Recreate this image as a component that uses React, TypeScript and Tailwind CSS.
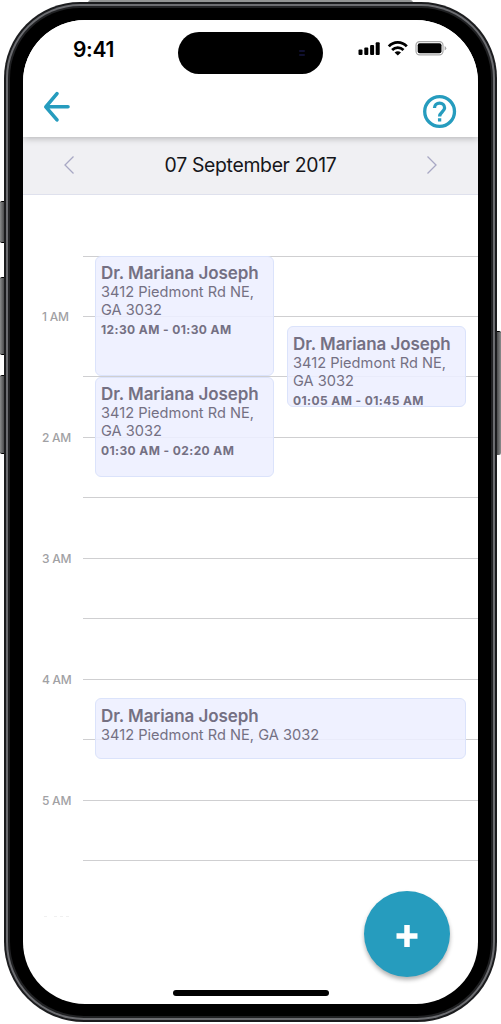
import type { ReactNode } from "react";

const hours = ["1 AM", "2 AM", "3 AM", "4 AM", "5 AM"];

function StatusBar() {
  return (
    <div className="flex h-[62px] items-start pl-[50px] pr-[31px]">
      <div className="w-[105px] pt-[15px] text-[21px] leading-[30px] font-semibold tracking-[-0.35px] text-black">9:41</div>
      <div className="mt-[12px] flex h-[42px] w-[145px] items-center justify-end rounded-full bg-black pr-[18px]">
        <div className="flex size-[6px] flex-col justify-between rounded-full">
          <i className="h-[2px] rounded-full bg-[#101030]" />
          <i className="h-[2px] rounded-full bg-[#101030]" />
        </div>
      </div>
      <div className="mt-[20px] ml-auto flex items-start">
        <svg width="89" height="17" viewBox="0 0 89 17">
          <rect x="0.5" y="9.5" width="4" height="5.5" rx="1" />
          <rect x="6.3" y="7.6" width="4" height="7.4" rx="1" />
          <rect x="12.1" y="5" width="4" height="10" rx="1" />
          <rect x="17.7" y="2.3" width="4" height="12.7" rx="1" />
          <g transform="translate(30 1.2)" fill="none" stroke="#000" strokeWidth="2.7">
            <path d="M0.8 5.2 C5.5 -0.3 14 -0.3 18.8 5.2" />
            <path d="M4.1 8.8 C7.3 5.5 12.3 5.5 15.5 8.8" />
            <path d="M9.8 14.4 L6.6 11.2 C8.5 9.6 11.1 9.6 13 11.2Z" fill="#000" stroke="none" />
          </g>
          <rect x="58" y="1.6" width="27" height="13.2" rx="3.6" fill="none" stroke="#a8a8a8" strokeWidth="1.2" />
          <rect x="59.7" y="3.2" width="23.8" height="10" rx="2" />
          <path d="M86.6 6 Q88.3 6.7 88.3 8.2 Q88.3 9.7 86.6 10.4Z" fill="#a8a8a8" />
        </svg>
      </div>
    </div>
  );
}

function Header() {
  return (
    <header className="relative z-10 h-[117px] bg-white shadow-[0_1px_7px_rgba(0,0,0,0.28)]">
      <StatusBar />
      <div className="flex items-start justify-between pr-[21px] pl-[20px]">
        <svg className="mt-[9px]" width="28" height="32" viewBox="0 0 28 32" fill="none" stroke="#269cbe" strokeWidth="3.6" strokeLinecap="round" strokeLinejoin="round">
          <path d="M14 2.7 L2.8 15.8 L14 28.8 M3.5 15.8 H25" />
        </svg>
        <svg className="mt-[12px]" width="35" height="35" viewBox="0 0 35 35" fill="none" stroke="#269cbe" strokeWidth="3.3">
          <circle cx="17.6" cy="17.5" r="14.9" />
          <path d="M12.5 14 C12.5 11 14.7 9.2 17.6 9.2 C20.4 9.2 22.6 11.1 22.6 14 C22.6 17.6 17.6 17.9 17.6 22.6" />
          <path d="M17.6 24.2 V27.4" />
        </svg>
      </div>
    </header>
  );
}

function Chevron({ d }: { d: string }) {
  return (
    <svg width="12" height="20" viewBox="0 0 12 20" fill="none" stroke="#a8a8c4" strokeWidth="1.3">
      <path d={d} />
    </svg>
  );
}

function DateBar() {
  return (
    <div className="flex h-[58px] items-center justify-between border-b border-[#dfe1ed] bg-[#f0f0f3] pr-[40px] pb-[2px] pl-[40px]">
      <Chevron d="M10.5 1.5 L2 10 L10.5 18.5" />
      <span className="text-[19.4px] leading-[24px] tracking-[-0.32px] text-[#16161a]">07 September 2017</span>
      <Chevron d="M1.5 1.5 L10 10 L1.5 18.5" />
    </div>
  );
}

function Appointment({ place, address, time }: { place: string; address: ReactNode; time?: string }) {
  return (
    <article className={"absolute overflow-hidden rounded-[6px] border border-[#dbe3fb] bg-[#edefff]/88 pl-[5px] text-[#747083] " + place}>
      <h2 className="text-[17px] leading-[20px] font-semibold tracking-[-0.07px] whitespace-nowrap">Dr. Mariana Joseph</h2>
      <p className="mt-px text-[14.6px] leading-[17.6px] tracking-[0.02px] whitespace-nowrap">{address}</p>
      {time && <p className="mt-[3px] text-[12px] leading-[16px] font-bold tracking-[0.4px] whitespace-nowrap">{time}</p>}
    </article>
  );
}

function Schedule() {
  const split = (
    <>
      3412 Piedmont Rd NE,
      <br />
      GA 3032
    </>
  );
  return (
    <main className="relative pt-[60.6px]">
      <div className="ml-[60px] border-t border-[#cfcfd1]" />
      {hours.map((hour) => (
        <div key={hour} className="flex h-[120.9px] flex-col">
          <div className="flex h-[69px] items-center">
            <span className="mt-[52px] w-[60px] pl-[19px] text-[12px] leading-[16px] font-medium tracking-[-0.25px] text-[#a1a1a4]">{hour}</span>
            <div className="mt-[51px] flex-1 border-t border-[#cfcfd1]" />
          </div>
          <div className="mt-auto ml-[60px] border-t border-[#cfcfd1]" />
        </div>
      ))}
      <div className="mt-[55px] ml-[21px] flex gap-[3px]">
        <i className="mr-[4px] h-px w-[3px] bg-[#f0f0f0]" />
        <i className="h-px w-[3px] bg-[#f0f0f0]" />
        <i className="h-px w-[3px] bg-[#f0f0f0]" />
        <i className="h-px w-[3px] bg-[#f0f0f0]" />
      </div>
      <Appointment place="left-[72px] top-[61px] h-[120px] w-[179px] pt-[6px]" address={split} time="12:30 AM - 01:30 AM" />
      <Appointment place="left-[72px] top-[182px] h-[100px] w-[179px] pt-[6px]" address={split} time="01:30 AM - 02:20 AM" />
      <Appointment place="left-[264px] top-[131px] h-[81px] w-[179px] pt-[7px]" address={split} time="01:05 AM - 01:45 AM" />
      <Appointment place="left-[72px] top-[503px] h-[61px] w-[371px] pt-[7px]" address="3412 Piedmont Rd NE, GA 3032" />
    </main>
  );
}

function Phone({ children }: { children: ReactNode }) {
  return (
    <div className="relative h-[1024px] w-[501px] overflow-hidden bg-white px-[4px] pt-[2px]">
      <i className="absolute top-[201px] left-0 h-[42px] w-[6px] rounded-l-[2px] border-y border-black bg-linear-to-r from-[#8a8c8c] to-[#303032]" />
      <i className="absolute top-[277px] left-0 h-[78px] w-[6px] rounded-l-[2px] border-y border-black bg-linear-to-r from-[#8a8c8c] to-[#303032]" />
      <i className="absolute top-[375px] left-0 h-[79px] w-[6px] rounded-l-[2px] border-y border-black bg-linear-to-r from-[#8a8c8c] to-[#303032]" />
      <i className="absolute top-[331px] right-0 h-[124px] w-[6px] rounded-r-[2px] border-t border-black bg-linear-to-l from-[#8a8c8c] to-[#303032]" />
      <i className="absolute top-0 left-[88px] h-[3px] w-[325px] rounded-t-full bg-[#929494]" />
      <div className="relative h-[1020px] rounded-t-[76px] rounded-b-[80px] bg-[#1b1c1e] p-[2px]">
        <div className="h-full rounded-t-[74px] rounded-b-[78px] bg-[#6c6d71] p-[2px]">
          <div className="h-full rounded-t-[72px] rounded-b-[76px] bg-[#202123] p-[2px]">
            <div className="h-full rounded-t-[70px] rounded-b-[74px] bg-black px-[13px] pt-[12px] pb-[12px]">
              <div className="relative h-[984px] w-[455px] overflow-hidden rounded-[62px] bg-white">{children}</div>
            </div>
          </div>
        </div>
      </div>
    </div>
  );
}

export default function App() {
  return (
    <div className="font-['Inter',sans-serif]">
      <Phone>
        <Header />
        <DateBar />
        <Schedule />
        <button aria-label="Add" className="absolute right-[28px] bottom-[27px] flex size-[86px] items-center justify-center rounded-full bg-[#269cbe] shadow-[0_3px_4px_rgba(0,0,0,0.3)]">
          <svg width="22" height="22" viewBox="0 0 22 22" className="mt-[3px]" stroke="#fff" strokeWidth="5.5">
            <path d="M0.5 11 H21.5 M11 0 V22" />
          </svg>
        </button>
        <div className="absolute bottom-[8px] left-[150px] h-[6px] w-[156px] rounded-full bg-black" />
      </Phone>
    </div>
  );
}
